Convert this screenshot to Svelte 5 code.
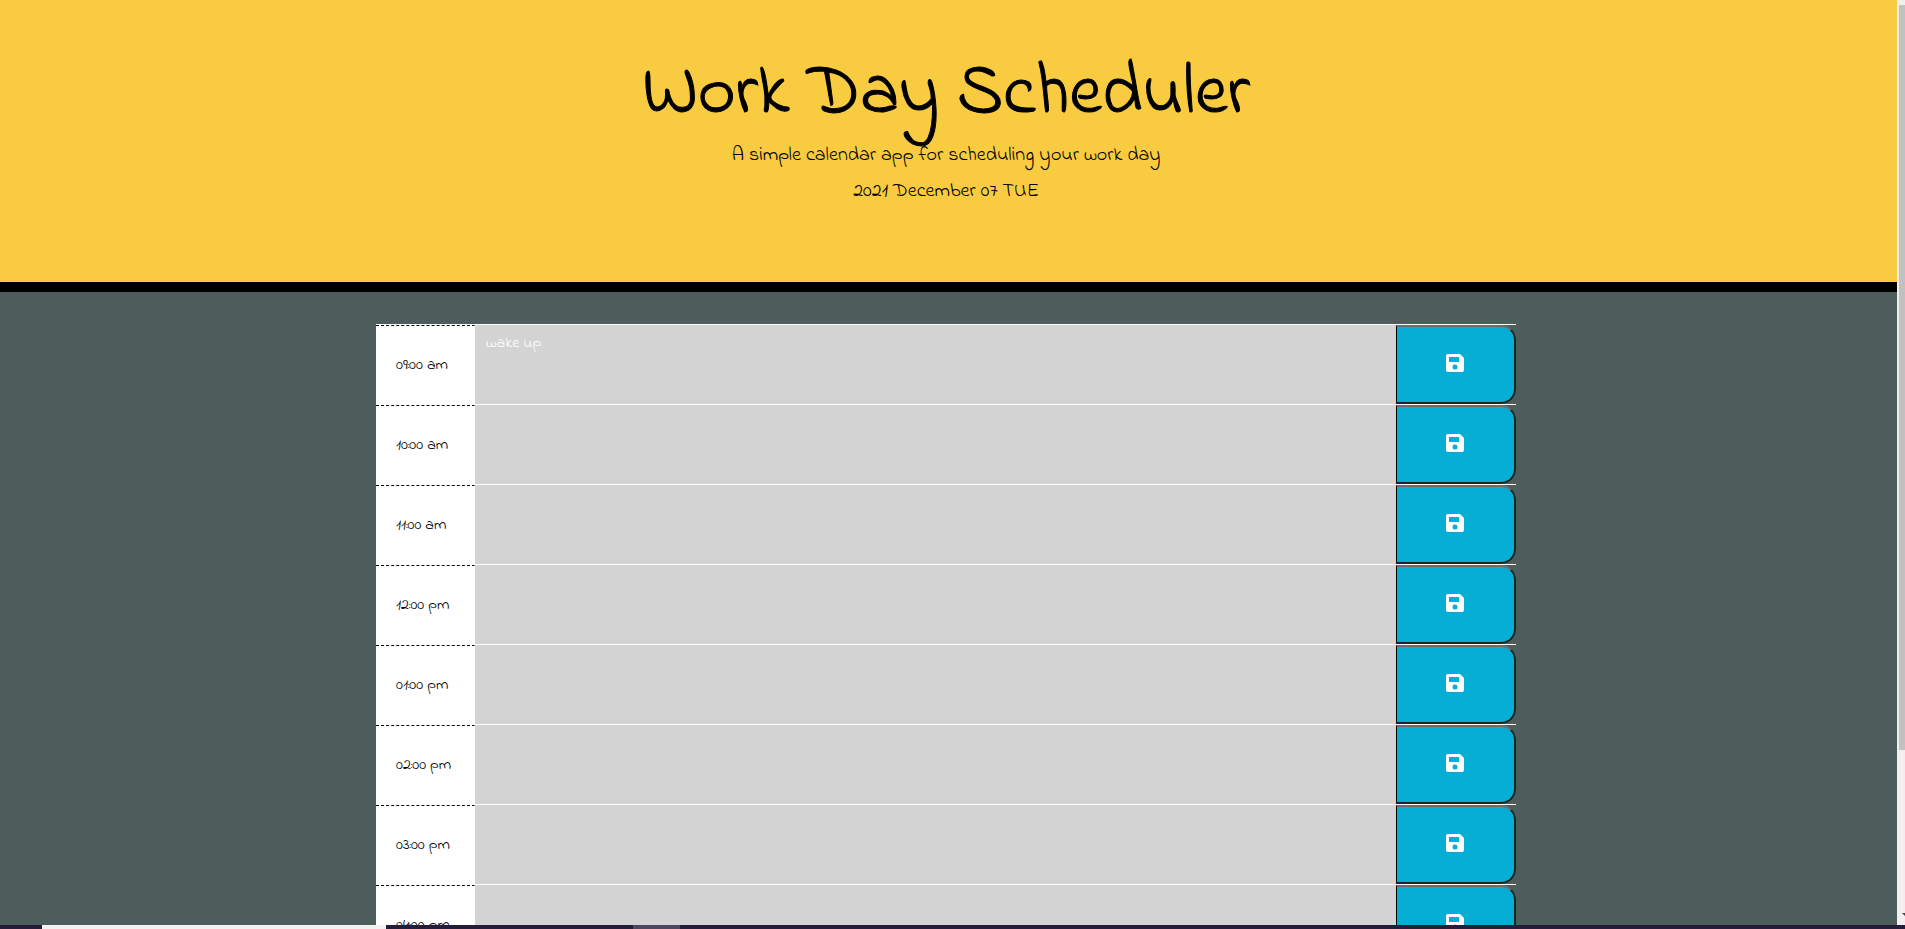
<script>
  const hours = ['09:00 am', '10:00 am', '11:00 am', '12:00 pm', '01:00 pm', '02:00 pm', '03:00 pm', '04:00 pm', '05:00 pm'];
  let notes = $state(hours.map((_, i) => (i === 0 ? 'wake up' : '')));
</script>

<div class="window">
  <div class="view">
    <div class="page">
      <header>
        <h1>Work Day Scheduler</h1>
        <p>A simple calendar app for scheduling your work day</p>
        <p>2021 December 07 TUE</p>
      </header>
      <main>
        {#each hours as hour, i}
          <div class="row">
            <label for="note-{i}">{hour}</label>
            <textarea id="note-{i}" bind:value={notes[i]}></textarea>
            <button type="button" aria-label="Save">
              <svg width="24" height="24" viewBox="0 0 24 24" aria-hidden="true">
                <path fill="#fff" fill-rule="evenodd" d="M17 3H5a2 2 0 0 0-2 2v14a2 2 0 0 0 2 2h14a2 2 0 0 0 2-2V7zM12 18.500a2.500 2.500 0 1 1 0-5 2.500 2.500 0 0 1 0 5zM16 11H6V6h10z" />
              </svg>
            </button>
          </div>
        {/each}
      </main>
    </div>
    <div class="scroll"><div class="thumb"></div><i></i></div>
  </div>
  <div class="taskbar"><span class="search"></span><span class="active"></span></div>
</div>

<style>
  :global(body) { margin: 0; }
  .window {
    height: 100vh;
    display: flex;
    flex-direction: column;
    overflow: hidden;
    font-family: "Indie Flower", "Open Sans", sans-serif;
    font-weight: 300;
    color: #000;
  }
  .view { flex: 1; min-height: 0; display: flex; overflow: hidden; background: #4d5d5c; }
  .page { flex: 1; min-width: 0; }
  header {
    box-sizing: border-box;
    height: 292px;
    padding: 52px 5px 0 0;
    background: #f8cb40;
    border-bottom: 10px solid #000;
    text-align: center;
  }
  h1 { margin: 0; font-size: 72px; line-height: 86px; font-weight: 300; -webkit-text-stroke: 1px #000; }
  p { margin: 0; font-size: 20px; line-height: 36px; }
  main { max-width: 1140px; margin: 32px auto 0; padding-right: 5px; }
  .row {
    display: grid;
    grid-template-columns: 99px 1fr 120px;
    height: 79px;
    border-top: 1px solid #fff;
  }
  label {
    box-sizing: border-box;
    padding: 27px 0 0 20px;
    font-size: 16px;
    line-height: 24px;
    background: #fff;
    border-top: 1px dashed #000;
    border-right: 1px solid #fff;
  }
  textarea {
    box-sizing: border-box;
    width: 100%;
    height: 100%;
    padding: 6px 11px;
    border: 0;
    resize: none;
    outline: 0;
    background: #d3d3d3;
    color: #fff;
    font: inherit;
    font-size: 16px;
    line-height: 24px;
  }
  button {
    display: flex;
    align-items: center;
    justify-content: center;
    padding: 0 2px 3px 0;
    background: #06aed5;
    border: 2px solid #1c2425;
    border-top-color: #6d6d6d;
    border-left: 1px solid #000;
    border-radius: 0 15px 15px 0;
  }
  .scroll { width: 6px; padding: 5px 0 0 2px; background: #f1eff0; position: relative; }
  .thumb { height: 745px; background: #c1c1c1; }
  .scroll i {
    position: absolute;
    right: 0;
    bottom: 9px;
    border-top: 3px solid #444;
    border-left: 3px solid transparent;
  }
  .taskbar { height: 4px; padding-left: 42px; display: flex; background: #241c38; }
  .search { width: 344px; margin-right: 247px; background: #f2f2f2; }
  .active { width: 47px; background: #4d4860; }
</style>
